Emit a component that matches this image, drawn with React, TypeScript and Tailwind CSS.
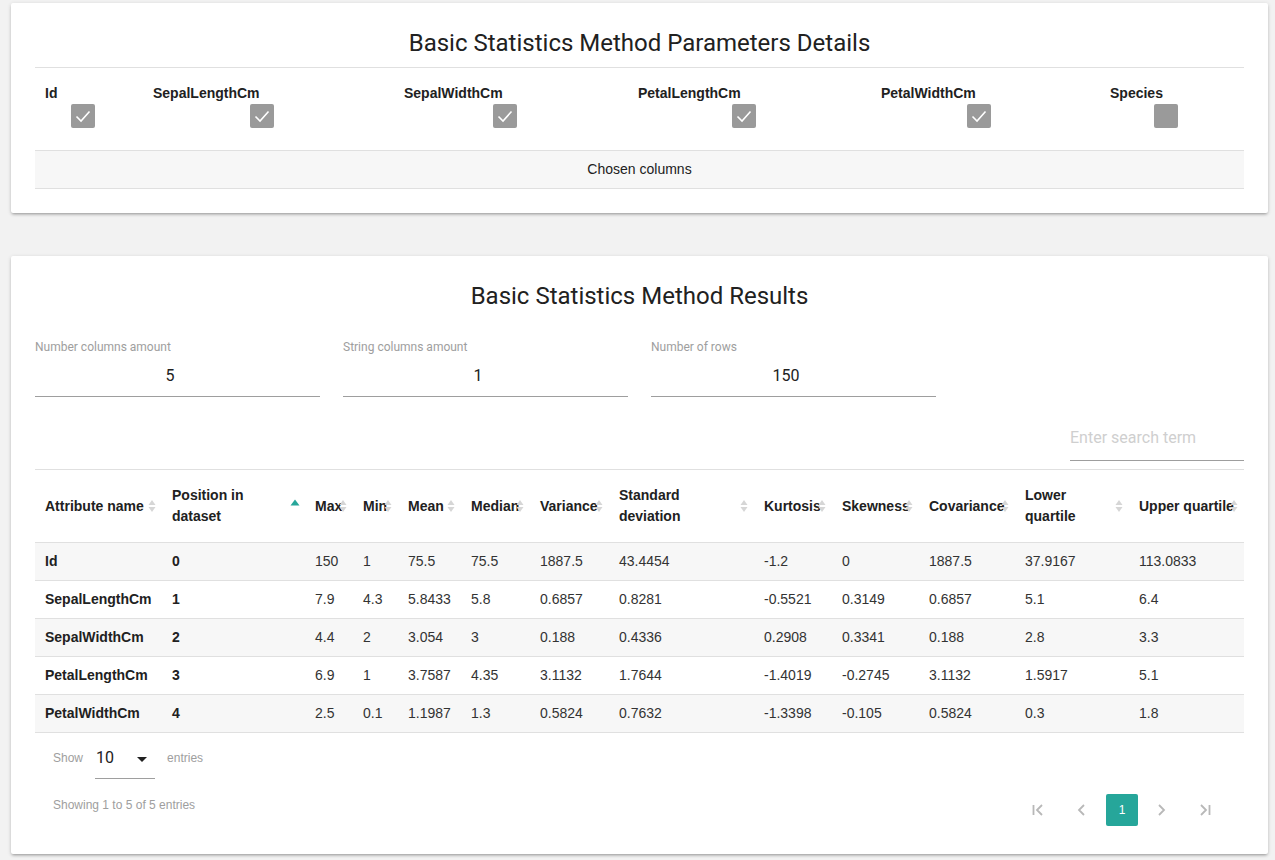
import React from 'react';

const columns = [
  { name: 'Id', ml: 'ml-[26px]', w: 'w-[108px]', checked: true },
  { name: 'SepalLengthCm', ml: 'ml-[97px]', w: 'w-[251px]', checked: true },
  { name: 'SepalWidthCm', ml: 'ml-[89px]', w: 'w-[234px]', checked: true },
  { name: 'PetalLengthCm', ml: 'ml-[94px]', w: 'w-[243px]', checked: true },
  { name: 'PetalWidthCm', ml: 'ml-[86px]', w: 'w-[229px]', checked: true },
  { name: 'Species', ml: 'ml-[44px]', w: 'w-[144px]', checked: false },
];

// second line is used where the header wraps in the original table
const headers = [
  { label: 'Attribute name', w: 'w-[127px]' },
  { label: 'Position in', line2: 'dataset', w: 'w-[143px]', active: true },
  { label: 'Max', w: 'w-[48px]' },
  { label: 'Min', w: 'w-[45px]' },
  { label: 'Mean', w: 'w-[63px]' },
  { label: 'Median', w: 'w-[69px]' },
  { label: 'Variance', w: 'w-[79px]' },
  { label: 'Standard', line2: 'deviation', w: 'w-[145px]' },
  { label: 'Kurtosis', w: 'w-[78px]' },
  { label: 'Skewness', w: 'w-[87px]' },
  { label: 'Covariance', w: 'w-[96px]' },
  { label: 'Lower', line2: 'quartile', w: 'w-[114px]' },
  { label: 'Upper quartile', w: 'w-[115px]' },
];

const rows = [
  ['Id', '0', '150', '1', '75.5', '75.5', '1887.5', '43.4454', '-1.2', '0', '1887.5', '37.9167', '113.0833'],
  ['SepalLengthCm', '1', '7.9', '4.3', '5.8433', '5.8', '0.6857', '0.8281', '-0.5521', '0.3149', '0.6857', '5.1', '6.4'],
  ['SepalWidthCm', '2', '4.4', '2', '3.054', '3', '0.188', '0.4336', '0.2908', '0.3341', '0.188', '2.8', '3.3'],
  ['PetalLengthCm', '3', '6.9', '1', '3.7587', '4.35', '3.1132', '1.7644', '-1.4019', '-0.2745', '3.1132', '1.5917', '5.1'],
  ['PetalWidthCm', '4', '2.5', '0.1', '1.1987', '1.3', '0.5824', '0.7632', '-1.3398', '-0.105', '0.5824', '0.3', '1.8'],
];

const stats = [
  { label: 'Number columns amount', value: '5' },
  { label: 'String columns amount', value: '1' },
  { label: 'Number of rows', value: '150' },
];

function Checkbox({ checked }: { checked: boolean }) {
  return (
    <div className="flex h-6 w-6 items-center justify-center rounded-[2px] bg-[#9a9a9a]">
      {checked && (
        <svg width="24" height="24" viewBox="0 0 24 24" fill="none">
          <path d="M5.5 12.5 L10 17 L18.5 7.5" stroke="#fff" strokeWidth="1.6" />
        </svg>
      )}
    </div>
  );
}

function SortIcon({ active }: { active?: boolean }) {
  if (active) {
    return (
      <svg width="10" height="14" viewBox="0 0 10 14">
        <path d="M0.5 6.5 L5 0.5 L9.5 6.5 Z" fill="#26a69a" />
      </svg>
    );
  }
  return (
    <svg width="10" height="16" viewBox="0 0 10 16">
      <path d="M1.5 7 L5 2 L8.5 7 Z" fill="#d6d6d6" />
      <path d="M1.5 9 L5 14 L8.5 9 Z" fill="#d6d6d6" />
    </svg>
  );
}

function PageIcon({ d }: { d: string }) {
  return (
    <div className="flex h-8 w-8 items-center justify-center">
      <svg width="18" height="18" viewBox="0 0 18 18" fill="none">
        <path d={d} stroke="#b8b8b8" strokeWidth="1.8" />
      </svg>
    </div>
  );
}

export default function App() {
  return (
    <div className="min-h-[860px] bg-[#f2f2f2] pb-[6px] pl-[11px] pr-[7px] pt-[3px] font-['Liberation_Sans',Arial,sans-serif] text-[#212121]">
      <div className="rounded-[2px] bg-white px-6 pb-6 pt-[26px] shadow-[0_2px_3px_-1px_rgba(0,0,0,0.3),0_1px_4px_0_rgba(0,0,0,0.14)]">
        <h1 className="text-center font-['Roboto',sans-serif] text-[24px] leading-[28px] text-[#212121]">
          Basic Statistics Method Parameters Details
        </h1>
        <div className="mt-[10px] flex border-t border-[#e0e0e0] pb-[22px] pt-[17px]">
          {columns.map((c) => (
            <div key={c.name} className={`${c.w} px-[10px]`}>
              <div className="text-[14px] font-bold leading-4">{c.name}</div>
              <div className={`${c.ml} mt-[3px]`}>
                <Checkbox checked={c.checked} />
              </div>
            </div>
          ))}
        </div>
        <div className="flex h-[39px] items-center justify-center border-y border-[#e0e0e0] bg-[#f7f7f7] text-[14px] text-[#212121]">
          Chosen columns
        </div>
      </div>

      <div className="mt-[43px] rounded-[2px] bg-white px-6 pb-[28px] pt-[26px] shadow-[0_2px_3px_-1px_rgba(0,0,0,0.3),0_1px_4px_0_rgba(0,0,0,0.14)]">
        <h2 className="text-center font-['Roboto',sans-serif] text-[24px] leading-[28px] text-[#212121]">
          Basic Statistics Method Results
        </h2>
        <div className="mt-[30px] flex gap-[23px] font-['Roboto',sans-serif]">
          {stats.map((s) => (
            <div key={s.label} className="w-[285px]">
              <div className="text-[12px] leading-[14px] text-[#9e9e9e]">{s.label}</div>
              <div className="mt-3 border-b border-[#9e9e9e] pb-[10px] pr-[15px] text-center text-[16px] leading-5 text-[#212121]">
                {s.value}
              </div>
            </div>
          ))}
        </div>
        <div className="mt-[31px] flex justify-end">
          <div className="w-[174px] border-b border-[#9e9e9e] pb-[12px] font-['Roboto',sans-serif] text-[16px] leading-5 text-[#cfcfcf]">
            Enter search term
          </div>
        </div>
        <table className="mt-2 w-full table-fixed border-collapse text-[14px]">
          <thead>
            <tr className="h-[73px] border-y border-[#e0e0e0]">
              {headers.map((h) => (
                <th key={h.label} className={`${h.w} relative pl-[10px] text-left align-middle font-bold leading-[21px] text-[#212121]`}>
                  <div className="whitespace-nowrap">
                    {h.label}
                    {h.line2 && (
                      <>
                        <br />
                        {h.line2}
                      </>
                    )}
                  </div>
                  <div className="absolute right-[5px] top-1/2 -translate-y-1/2">
                    <SortIcon active={h.active} />
                  </div>
                </th>
              ))}
            </tr>
          </thead>
          <tbody>
            {rows.map((r, i) => (
              <tr key={r[0]} className={`h-[38px] border-b border-[#e0e0e0] ${i % 2 === 0 ? 'bg-[#f7f7f7]' : 'bg-white'}`}>
                {r.map((v, j) => (
                  <td key={j} className={`pl-[10px] ${j < 2 ? 'font-bold text-[#212121]' : 'text-[#333]'}`}>
                    {v}
                  </td>
                ))}
              </tr>
            ))}
          </tbody>
        </table>

        <div className="mt-[15px] flex items-start pl-[18px] text-[12px] text-[#9e9e9e]">
          <span className="mt-[3px] leading-[14px]">Show</span>
          <div className="ml-[12px] flex w-[60px] items-center justify-between border-b border-[#9e9e9e] pb-[10px] pl-[1px] pr-[8px]">
            <span className="font-['Roboto',sans-serif] text-[16px] leading-5 text-[#212121]">10</span>
            <svg width="10" height="6" viewBox="0 0 10 6" className="mt-[4px]">
              <path d="M0 0 L10 0 L5 5 Z" fill="#212121" />
            </svg>
          </div>
          <span className="ml-[12px] mt-[3px] leading-[14px]">entries</span>
        </div>

        <div className="flex items-start justify-between">
          <div className="ml-[18px] mt-[19px] text-[12px] leading-[14px] text-[#9e9e9e]">
            Showing 1 to 5 of 5 entries
          </div>
          <div className="mr-[23px] mt-[15px] flex items-center">
            <PageIcon d="M4.5 4 V14 M13 4 L8 9 L13 14" />
            <div className="ml-3">
              <PageIcon d="M11 4 L6 9 L11 14" />
            </div>
            <div className="ml-2 flex h-8 w-8 items-center justify-center rounded-[2px] bg-[#26a69a] text-[12px] text-white">
              1
            </div>
            <div className="ml-[7px]">
              <PageIcon d="M7 4 L12 9 L7 14" />
            </div>
            <div className="ml-3">
              <PageIcon d="M5 4 L10 9 L5 14 M13.5 4 V14" />
            </div>
          </div>
        </div>
      </div>
    </div>
  );
}
